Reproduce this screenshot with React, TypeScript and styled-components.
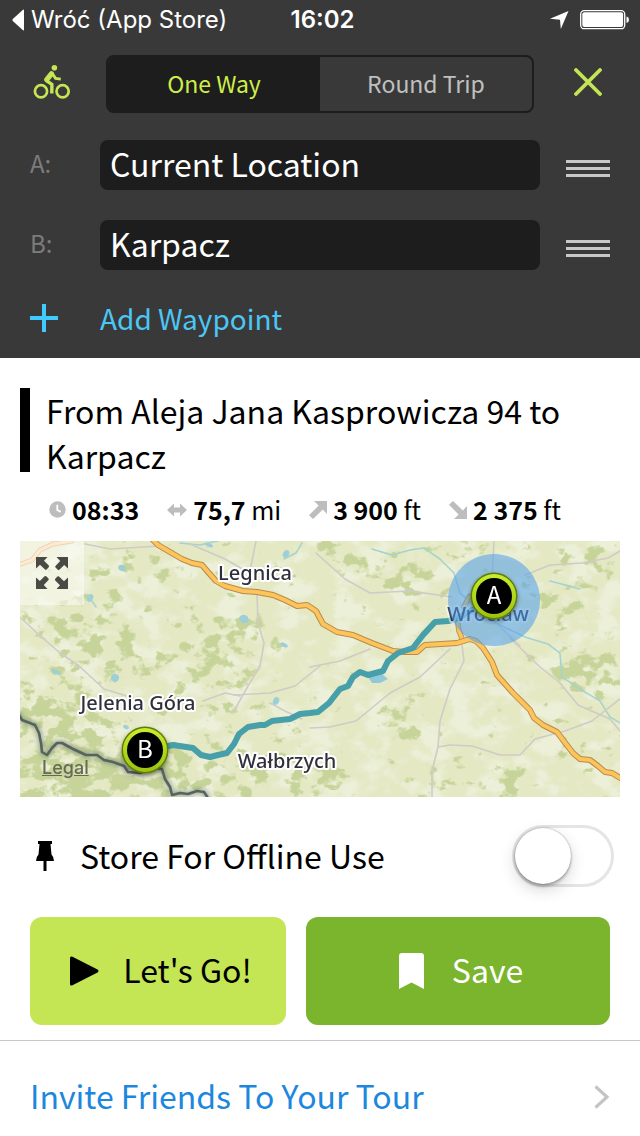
import React, { useState } from "react";
import styled, { createGlobalStyle } from "styled-components";

const uiFont = `"Noto Sans CJK SC", "Noto Sans", sans-serif`;
const systemFont = `Inter, "Liberation Sans", sans-serif`;

const GlobalStyle = createGlobalStyle`
  *, *::before, *::after { box-sizing: border-box; }
  body { margin: 0; background: #fff; color: #000; font-family: ${uiFont}; }
  button, input { font: inherit; color: inherit; margin: 0; }
  button { border: 0; background: none; padding: 0; cursor: pointer; }
  svg { display: block; }
`;

const Header = styled.header`
  background: #393939;
  padding-bottom: 10px;
`;

const StatusBar = styled.div`
  display: grid;
  grid-template-columns: 1fr auto 1fr;
  align-items: center;
  height: 40px;
  padding: 0 11px 0 12px;
  color: #fff;
  font: 400 24px/28px ${systemFont};
`;

const BackLink = styled.a`
  display: flex;
  align-items: center;
  gap: 7px;
  color: inherit;
  text-decoration: none;
  white-space: nowrap;
`;

const Clock = styled.time`
  padding-left: 4px;
  font-weight: 600;
`;

const StatusIcons = styled.div`
  display: flex;
  justify-content: flex-end;
  align-items: center;
  gap: 11px;
`;

const FormRow = styled.div<{ $height: number; $top: number }>`
  display: grid;
  grid-template-columns: 70px 1fr 70px;
  align-items: center;
  height: ${(p) => p.$height}px;
  margin-top: ${(p) => p.$top}px;
  padding: 0 30px;
`;

const Segmented = styled.div`
  display: flex;
  height: 58px;
  margin: 0 6px;
  border: 2px solid #1d1d1d;
  border-radius: 8px;
  overflow: hidden;
`;

const Segment = styled.button<{ $active: boolean }>`
  flex: 1;
  padding-bottom: 2px;
  font-size: 23px;
  background: ${(p) => (p.$active ? "#1d1d1d" : "transparent")};
  color: ${(p) => (p.$active ? "#cfee4a" : "#c0c0c0")};
`;

const IconButton = styled.button`
  justify-self: end;
`;

const CloseButton = styled(IconButton)`
  padding: 0 8px 4px 0;
`;

const ModeButton = styled.button`
  justify-self: start;
  padding: 0 3px 4px;
`;

const PointLabel = styled.label`
  color: #7c7c7c;
  font-size: 24px;
  line-height: 32px;
  padding-bottom: 4px;
`;

const PointInput = styled.input`
  width: 100%;
  height: 50px;
  padding: 0 10px 4px;
  border: 0;
  border-radius: 8px;
  background: #1d1d1d;
  color: #fff;
  font-size: 32px;
`;

const AddWaypoint = styled.button`
  display: grid;
  grid-template-columns: 70px auto;
  align-items: center;
  height: 60px;
  margin: 18px 30px 0;
  color: #4cc6f4;
  font-size: 28px;
  line-height: 60px;
`;

const Summary = styled.section`
  padding: 30px 20px 0;
`;

const TitleRow = styled.div`
  display: flex;
  align-items: flex-start;
  gap: 16px;
`;

const TitleBar = styled.span`
  flex: none;
  width: 10px;
  height: 84px;
  background: #000;
`;

const Title = styled.h1`
  margin: 0;
  font-size: 32px;
  font-weight: 400;
  line-height: 45px;
`;

const Stats = styled.ul`
  display: flex;
  gap: 28px;
  margin: 14px 0;
  padding: 0 0 0 29px;
  list-style: none;
  font-size: 25px;
  line-height: 35px;
`;

const Stat = styled.li`
  display: flex;
  align-items: center;
  gap: 6px;
  white-space: nowrap;
`;

const MapBox = styled.div`
  position: relative;
  background: #e6eac9;
`;

const ExpandButton = styled.button`
  position: absolute;
  top: 0;
  left: 0;
  display: grid;
  place-items: center;
  width: 64px;
  height: 64px;
  background: rgba(255, 255, 255, 0.5);
`;

const LegalLink = styled.a`
  position: absolute;
  left: 22px;
  bottom: 18px;
  color: #646a55;
  font: 500 18px/22px ${systemFont};
`;

const OfflineRow = styled.div`
  display: grid;
  grid-template-columns: 50px 1fr auto;
  align-items: center;
  height: 62px;
  margin-top: 28px;
  padding: 0 26px 0 30px;
`;

const OfflineLabel = styled.label`
  font-size: 32px;
  line-height: 46px;
  padding-bottom: 2px;
`;

const Switch = styled.input`
  appearance: none;
  display: flex;
  width: 102px;
  height: 62px;
  padding: 0;
  border: 3px solid #e5e5e5;
  border-radius: 31px;
  background: #fff;
  cursor: pointer;

  &::before {
    content: "";
    width: 56px;
    height: 56px;
    border-radius: 50%;
    background: #fff;
    box-shadow: 0 0 2px rgba(0, 0, 0, 0.4), 0 3px 3px rgba(0, 0, 0, 0.2), 0 6px 16px rgba(0, 0, 0, 0.16);
  }
  &:checked {
    justify-content: flex-end;
    background: #7ab52e;
    border-color: #7ab52e;
  }
`;

const Actions = styled.div`
  display: grid;
  grid-template-columns: 256fr 304fr;
  gap: 20px;
  padding: 30px 30px 15px;
`;

const ActionButton = styled.button<{ $primary?: boolean }>`
  display: flex;
  align-items: center;
  justify-content: center;
  gap: ${(p) => (p.$primary ? 24 : 28)}px;
  height: 108px;
  padding-left: 6px;
  border-radius: 12px;
  font-size: 32px;
  line-height: 44px;
  background: ${(p) => (p.$primary ? "#c4e554" : "#7ab52d")};
  color: ${(p) => (p.$primary ? "#000" : "#fff")};
`;

const ActionText = styled.span`
  padding-bottom: 4px;
`;

const InviteLink = styled.a`
  display: flex;
  align-items: center;
  justify-content: space-between;
  padding: 32px 30px 18px;
  border-top: 1px solid #c8c8c8;
  color: #1c87dd;
  font-size: 32px;
  line-height: 44px;
  text-decoration: none;
`;

const BikeIcon = () => (
  <svg width="38" height="36" viewBox="0 0 38 36" fill="none" stroke="#c4e554" aria-hidden="true">
    <circle cx="8" cy="27.3" r="6.1" strokeWidth="2.7" />
    <circle cx="29.6" cy="27.3" r="6.1" strokeWidth="2.7" />
    <circle cx="21.4" cy="3.7" r="2.8" fill="#c4e554" stroke="none" />
    <path d="M18.4 9.8 13.8 15.6" strokeWidth="5.2" strokeLinecap="round" />
    <path d="M19.2 9.4 22.6 14.4 27.8 15.2" strokeWidth="2.8" />
    <path d="M13 16.4 18.9 20.4 18.8 29.4" strokeWidth="3.4" strokeLinejoin="round" />
  </svg>
);

const CloseIcon = () => (
  <svg width="28" height="28" viewBox="0 0 28 28" stroke="#c4e554" strokeWidth="3.8" strokeLinecap="round" aria-hidden="true">
    <path d="M2 2 26 26M26 2 2 26" />
  </svg>
);

const HandleIcon = () => (
  <svg width="44" height="24" viewBox="0 0 44 24" fill="#c8c8c8" aria-hidden="true">
    <path d="M0 7h44v3H0zM0 14h44v3H0zM0 21h44v3H0z" />
  </svg>
);

const PlusIcon = () => (
  <svg width="28" height="28" viewBox="0 0 28 28" fill="#40caff" aria-hidden="true">
    <path d="M12 0h4v12h12v4H16v12h-4V16H0v-4h12z" />
  </svg>
);

const ClockIcon = () => (
  <svg width="17" height="17" viewBox="0 0 17 17" aria-hidden="true">
    <circle cx="8.5" cy="8.5" r="8.2" fill="#bdbdbd" />
    <path d="M8.3 3.8V9l3.4 1.9" fill="none" stroke="#fff" strokeWidth="1.8" />
  </svg>
);

const DistanceIcon = () => (
  <svg width="20" height="14" viewBox="0 0 20 14" fill="#bdbdbd" aria-hidden="true">
    <path d="M0 7 7 .5v4h6v-4L20 7l-7 6.5v-4H7v4z" />
  </svg>
);

const SlopeIcon = ({ down = false }: { down?: boolean }) => (
  <svg width="18" height="18" viewBox="0 0 18 18" fill="#bdbdbd" aria-hidden="true">
    <path
      transform={down ? "matrix(1 0 0 -1 0 18)" : undefined}
      d="M5 0H18V13L13.8 8.6 4 18 0 14.2 9.6 4.6z"
    />
  </svg>
);

const ExpandIcon = () => (
  <svg width="32" height="32" viewBox="0 0 32 32" fill="#484a43" aria-hidden="true">
    {[0, 90, 180, 270].map((angle) => (
      <path key={angle} transform={`rotate(${angle} 16 16)`} d="M0 0H11.5L8 3.8 12.8 8.6Q13.4 9.4 12.7 10.2L10.6 12.5Q9.8 13.1 9 12.5L4 7.8 0 11.5z" />
    ))}
  </svg>
);

const highway =
  "M132-2 138 4 150 11 162 18 172 22 182 24 188 31 196 40 205 45 223 50 237 51 253 54 265 59 277 65 287 64 296 70 303 83 317 91 333 94 352 102 373 110 385 111 397 111 405 104 437 102 450 98 456 100 463 107 472 121 477 134 493 152 510 169 514 177 523 184 537 191 546 203 553 212 560 218 570 219 578 225 585 231 592 232 602 238";
const route =
  "M144 206 153 204 173 207 181 214 190 216 198 214 207 212 214 203 219 193 228 186 240 184 245 184 252 180 270 178 280 173 290 172 298 171 309 162 320 148 328 145 333 136 340 131 348 134 363 130 368 120 378 112 393 107 403 94 415 81 428 80 439 77 446 72 460 66";
const border =
  "M-2 172 2 179 15 184 19 192 21 202 22 211 27 214 32 207 37 202 42 202 53 208 66 214 77 214 84 219 93 221 104 225 108 231 120 232 135 227 142 228 145 238 150 246 152 254 160 252 168 253 177 250 184 251 188 257";

const minorRoads = [
  "M65 3 90 8 140 5M170 3 205 18 226 30M236 0 230 30M237 52 238 82 244 102 240 125 228 145 214 170M214 154 250 152 275 145 300 125",
  "M0 76 18 93 40 112 58 124 84 148 110 156M183 160 205 152 220 155M250 162 265 170 282 178",
  "M296 12 325 38 350 52 390 50 432 56M290 126 320 120 350 108M290 187 310 186 336 180 370 152 400 136 430 108",
  "M442 104 444 120 430 148 420 180 418 206 412 230 412 256M418 206 430 204 452 205 480 214 500 214 515 198 545 190 572 180 582 172 600 158M490 97 520 126 540 142 558 164 590 178 600 190",
  "M505 34 530 24 562 22 588 17 600 10M474 0 472 38M476 82 500 105",
];

const rivers = [
  "M352 8 372 14 390 9 404 7 420 18 434 32 440 52 456 66 476 82 505 96 528 103 540 112 542 136 560 148 580 160 590 176 602 183",
  "M160 2 180 4 198 0M264 18 276 12 282 2M68 54 76 66M530 40 560 48",
];

const lakes = [
  [102, 27, 4, 3],
  [70, 57, 3, 4],
  [224, 78, 5, 4],
  [95, 137, 4, 4],
  [264, 104, 4, 2],
  [36, 131, 5, 2],
  [256, 160, 3, 4],
  [106, 186, 3, 2],
  [189, 4, 4, 2],
  [266, 13, 3, 4],
];

// Wooded areas as cx, cy, rx, ry, density.
const woods = [
  [30, 172, 60, 24, 0.8],
  [90, 222, 90, 30, 0.72],
  [45, 240, 70, 24, 0.8],
  [60, 80, 60, 34, 0.52],
  [90, 122, 70, 28, 0.5],
  [205, 105, 48, 34, 0.66],
  [120, 30, 60, 20, 0.4],
  [180, 160, 60, 22, 0.4],
  [195, 236, 60, 26, 0.6],
  [318, 8, 26, 14, 0.8],
  [370, 32, 44, 18, 0.62],
  [300, 240, 36, 22, 0.7],
  [382, 180, 20, 24, 0.75],
  [486, 240, 26, 20, 0.65],
  [565, 130, 36, 26, 0.8],
  [575, 15, 34, 14, 0.75],
  [545, 58, 36, 22, 0.55],
  [448, 8, 18, 12, 0.85],
  [395, 48, 30, 14, 0.55],
  [260, 212, 50, 20, 0.4],
  [420, 240, 34, 22, 0.4],
  [556, 212, 26, 18, 0.45],
];

const Pin = ({ x, y, letter }: { x: number; y: number; letter: string }) => (
  <g transform={`translate(${x} ${y})`} filter="url(#pinShadow)">
    <circle r="23.5" fill="#5f7a08" />
    <circle r="22" fill="url(#pinRing)" />
    <circle r="18" fill="#000" />
    <text y="8" textAnchor="middle" fontFamily="Noto Sans CJK SC, sans-serif" fontSize="24" fill="#fff">
      {letter}
    </text>
  </g>
);

const places = [
  { name: "Legnica", x: 235, y: 39 },
  { name: "Jelenia Góra", x: 118, y: 169 },
  { name: "Wałbrzych", x: 267, y: 227 },
];

const RouteMap = () => (
  <svg width="100%" viewBox="0 0 600 256" role="img" aria-label="Route map">
    <defs>
      <filter id="woodland" x="0" y="0" width="600" height="256" filterUnits="userSpaceOnUse" colorInterpolationFilters="sRGB">
        <feGaussianBlur in="SourceAlpha" stdDeviation="9" result="density" />
        <feTurbulence type="fractalNoise" baseFrequency="0.06 0.08" numOctaves="5" seed="11" />
        <feColorMatrix values="0 0 0 0 0  0 0 0 0 0  0 0 0 0 0  0 0 0 1 0" result="noise" />
        <feComposite in="noise" in2="density" operator="arithmetic" k2="1" k3="0.4" />
        <feColorMatrix values="0 0 0 0 0.775  0 0 0 0 0.83  0 0 0 0 0.6  0 0 0 9 -6.6" />
      </filter>
      <filter id="fields" x="0" y="0" width="600" height="256" filterUnits="userSpaceOnUse" colorInterpolationFilters="sRGB">
        <feTurbulence type="fractalNoise" baseFrequency="0.035 0.05" numOctaves="4" seed="4" />
        <feColorMatrix values="0 0 0 0 0.925  0 0 0 0 0.94  0 0 0 0 0.85  0 0 0 5 -2.3" />
      </filter>
      <filter id="soft">
        <feGaussianBlur stdDeviation="2" />
      </filter>
      <filter id="pinShadow" x="-30%" y="-30%" width="160%" height="170%">
        <feDropShadow dx="0" dy="2" stdDeviation="2" floodOpacity="0.45" />
      </filter>
      <linearGradient id="pinRing" x1="0" y1="0" x2="0" y2="1">
        <stop offset="0" stopColor="#c8ee2c" />
        <stop offset="1" stopColor="#9cc20e" />
      </linearGradient>
      <clipPath id="mapClip">
        <rect width="600" height="256" />
      </clipPath>
    </defs>
    <g clipPath="url(#mapClip)">
      <rect width="600" height="256" fill="#e4e8c3" />
      <rect width="600" height="256" filter="url(#fields)" />
      <g filter="url(#woodland)">
        {woods.map(([cx, cy, rx, ry, density], i) => (
          <ellipse key={i} cx={cx} cy={cy} rx={rx} ry={ry} opacity={density} />
        ))}
      </g>
      <g fill="#9ecfd6">
        {lakes.map(([cx, cy, rx, ry], i) => (
          <ellipse key={i} cx={cx} cy={cy} rx={rx} ry={ry} transform={`rotate(25 ${cx} ${cy})`} />
        ))}
        <path d="M348 136 362 133 368 138 360 142 352 142z" fill="#92c8dc" />
      </g>
      <g fill="none" strokeLinejoin="round" strokeLinecap="round">
        {rivers.map((d) => (
          <path key={d} d={d} stroke="#a5d3cf" strokeWidth="1.6" strokeDasharray="5 1" />
        ))}
        {minorRoads.map((d) => (
          <path key={d} d={d} stroke="#cfcbc8" strokeWidth="1.6" />
        ))}
        <path d="M-2 24 12 19 20 9 33 3 52 0" stroke="#d9a67c" strokeWidth="5" />
        <path d="M-2 24 12 19 20 9 33 3 52 0" stroke="#fbd7a0" strokeWidth="3" />
        <path d="M443 100 439 90 437 76M444 66 449 56 456 52" stroke="#c39350" strokeWidth="5.5" />
        <path d="M443 100 439 90 437 76M444 66 449 56 456 52" stroke="#fbc55c" strokeWidth="3.5" />
        <path d={highway} stroke="#b98a4e" strokeWidth="6" />
        <path d={highway} stroke="#fdc45a" strokeWidth="4" />
        <path d={border} stroke="#6e7a70" strokeWidth="6" opacity="0.5" filter="url(#soft)" />
        <path d={border} stroke="#56645f" strokeWidth="2.6" />
        <path d={route} stroke="#479faa" strokeWidth="6" />
      </g>
      <g
        fontFamily="Noto Sans, sans-serif"
        fontSize="20"
        fontWeight="500"
        textAnchor="middle"
        fill="#30303c"
        stroke="#fff"
        strokeWidth="4"
        strokeLinejoin="round"
        paintOrder="stroke"
      >
        {places.map((p) => (
          <text key={p.name} x={p.x} y={p.y}>
            {p.name}
          </text>
        ))}
        <text x="468" y="80" strokeOpacity="0.5">
          Wrocław
        </text>
      </g>
      <circle cx="474" cy="59" r="46" fill="#4f9fec" opacity="0.55" />
      <Pin x={474} y={55} letter="A" />
      <Pin x={125} y={209} letter="B" />
    </g>
  </svg>
);

const PointRow = ({ id, label, value, top }: { id: string; label: string; value: string; top: number }) => (
  <FormRow $height={50} $top={top}>
    <PointLabel htmlFor={id}>{label}</PointLabel>
    <PointInput id={id} type="text" defaultValue={value} />
    <IconButton type="button" aria-label={`Reorder ${value}`}>
      <HandleIcon />
    </IconButton>
  </FormRow>
);

export default function App() {
  const [trip, setTrip] = useState("One Way");
  return (
    <>
      <GlobalStyle />
      <Header>
        <StatusBar>
          <BackLink href="#back">
            <svg width="12" height="22" viewBox="0 0 12 22" fill="#fff" aria-hidden="true">
              <path d="M12 1.5V20.500Q12 22 10.700 21L.8 12Q0 11 .8 10L10.700 1Q12 0 12 1.500z" />
            </svg>
            Wróć (App Store)
          </BackLink>
          <Clock>16:02</Clock>
          <StatusIcons>
            <svg width="19" height="18" viewBox="0 0 19 18" fill="#fff" aria-hidden="true">
              <path d="M18.500 0 10.800 18 10 8.800 0 7.800z" />
            </svg>
            <svg width="49" height="20" viewBox="0 0 49 20" fill="#fff" aria-hidden="true">
              <rect x="0.700" y="0.700" width="44" height="18" rx="3.500" fill="none" stroke="#fff" strokeWidth="1.300" />
              <rect x="2.300" y="2.300" width="40.800" height="14.800" rx="2" />
              <path d="M46.500 6.500Q49 7 49 9.800T46.500 13z" />
            </svg>
          </StatusIcons>
        </StatusBar>

        <FormRow $height={58} $top={15}>
          <ModeButton type="button" aria-label="Cycling">
            <BikeIcon />
          </ModeButton>
          <Segmented>
            {["One Way", "Round Trip"].map((name) => (
              <Segment key={name} type="button" $active={trip === name} aria-pressed={trip === name} onClick={() => setTrip(name)}>
                {name}
              </Segment>
            ))}
          </Segmented>
          <CloseButton type="button" aria-label="Close">
            <CloseIcon />
          </CloseButton>
        </FormRow>
        <PointRow id="point-a" label="A:" value="Current Location" top={27} />
        <PointRow id="point-b" label="B:" value="Karpacz" top={30} />
        <AddWaypoint type="button">
          <PlusIcon />
          Add Waypoint
        </AddWaypoint>
      </Header>

      <main>
        <Summary>
          <TitleRow>
            <TitleBar />
            <Title>From Aleja Jana Kasprowicza 94 to Karpacz</Title>
          </TitleRow>
          <Stats>
            <Stat>
              <ClockIcon />
              <b>08:33</b>
            </Stat>
            <Stat>
              <DistanceIcon />
              <span>
                <b>75,7</b> mi
              </span>
            </Stat>
            <Stat>
              <SlopeIcon />
              <span>
                <b>3 900</b> ft
              </span>
            </Stat>
            <Stat>
              <SlopeIcon down />
              <span>
                <b>2 375</b> ft
              </span>
            </Stat>
          </Stats>
          <MapBox>
            <RouteMap />
            <ExpandButton type="button" aria-label="Full screen map">
              <ExpandIcon />
            </ExpandButton>
            <LegalLink href="#legal">Legal</LegalLink>
          </MapBox>
        </Summary>

        <OfflineRow>
          <svg width="30" height="30" viewBox="0 0 30 30" aria-hidden="true">
            <path d="M8 0H22V3H20.500L21.500 13.500Q24 16 24 20H16.500V30H13.500V20H6Q6 16 8.500 13.500L9.500 3H8z" />
          </svg>
          <OfflineLabel htmlFor="offline">Store For Offline Use</OfflineLabel>
          <Switch id="offline" type="checkbox" role="switch" />
        </OfflineRow>

        <Actions>
          <ActionButton type="button" $primary>
            <svg width="29" height="30" viewBox="0 0 29 30" aria-hidden="true">
              <path d="M0 2Q0 0 2 .5L27.500 13.500Q29.500 15 27.500 16.500L2 29.500Q0 30 0 28z" />
            </svg>
            <ActionText>Let's Go!</ActionText>
          </ActionButton>
          <ActionButton type="button">
            <svg width="25" height="36" viewBox="0 0 25 36" fill="#fff" aria-hidden="true">
              <path d="M3 0H22Q25 0 25 3V36L12.500 29.500 0 36V3Q0 0 3 0z" />
            </svg>
            <ActionText>Save</ActionText>
          </ActionButton>
        </Actions>

        <InviteLink href="#invite">
          Invite Friends To Your Tour
          <svg width="16" height="28" viewBox="0 0 16 28" fill="none" stroke="#c4c4c4" strokeWidth="3.200" aria-hidden="true">
            <path d="M1.500 5.500 13 16 1.500 26.500" />
          </svg>
        </InviteLink>
      </main>
    </>
  );
}
